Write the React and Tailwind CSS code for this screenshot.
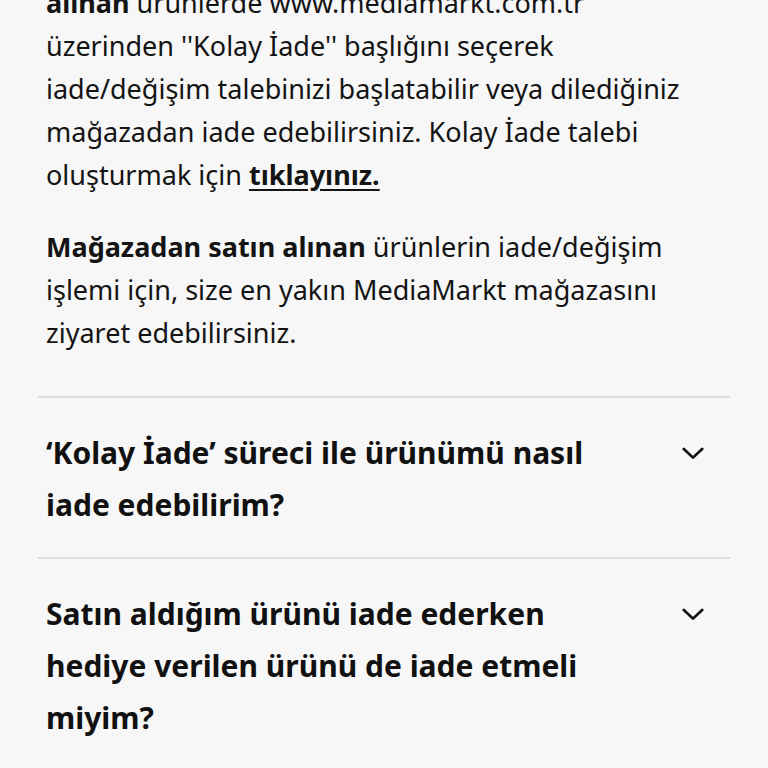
const FAQS = [
  ['‘Kolay İade’ süreci ile ürünümü nasıl', 'iade edebilirim?'],
  ['Satın aldığım ürünü iade ederken', 'hediye verilen ürünü de iade etmeli', 'miyim?'],
];

function Chevron() {
  return (
    <svg viewBox="0 0 24 14" className="mt-[20px] h-[13px] w-[22px] shrink-0" fill="none">
      <path d="M2 2 L12 11.5 L22 2" stroke="#111" strokeWidth="3" strokeLinecap="round" strokeLinejoin="round" />
    </svg>
  );
}

function FaqItem({ lines }) {
  return (
    <div className="flex items-start justify-between border-b-2 border-[#dedede] pl-2 pr-[26px] pt-[29px] pb-[26px]">
      <h3 className="text-[30px] leading-[52px] font-bold text-[#111]">
        {lines.map((l, i) => (
          <span key={i} className="block">{l}</span>
        ))}
      </h3>
      <Chevron />
    </div>
  );
}

export default function App() {
  return (
    <div className="min-h-screen overflow-hidden bg-[#f7f7f7] font-['Noto_Sans',sans-serif] text-[#141414]">
      <div className="mx-[38px] -mt-[19px]">
        {/* Online return info */}
        <div className="border-b-2 border-[#dedede] pl-2 pb-[42px]">
          <p className="text-[27px] leading-[43px]">
            <b>alınan</b> ürünlerde www.mediamarkt.com.tr<br />
            üzerinden ''Kolay İade'' başlığını seçerek<br />
            iade/değişim talebinizi başlatabilir veya dilediğiniz<br />
            mağazadan iade edebilirsiniz. Kolay İade talebi<br />
            oluşturmak için <a className="font-bold underline underline-offset-4">tıklayınız.</a>
          </p>
          <p className="mt-[29px] text-[27px] leading-[43px]">
            <b>Mağazadan satın alınan</b> ürünlerin iade/değişim<br />
            işlemi için, size en yakın MediaMarkt mağazasını<br />
            ziyaret edebilirsiniz.
          </p>
        </div>

        {FAQS.map((lines, i) => (
          <FaqItem key={i} lines={lines} />
        ))}
      </div>
    </div>
  );
}
